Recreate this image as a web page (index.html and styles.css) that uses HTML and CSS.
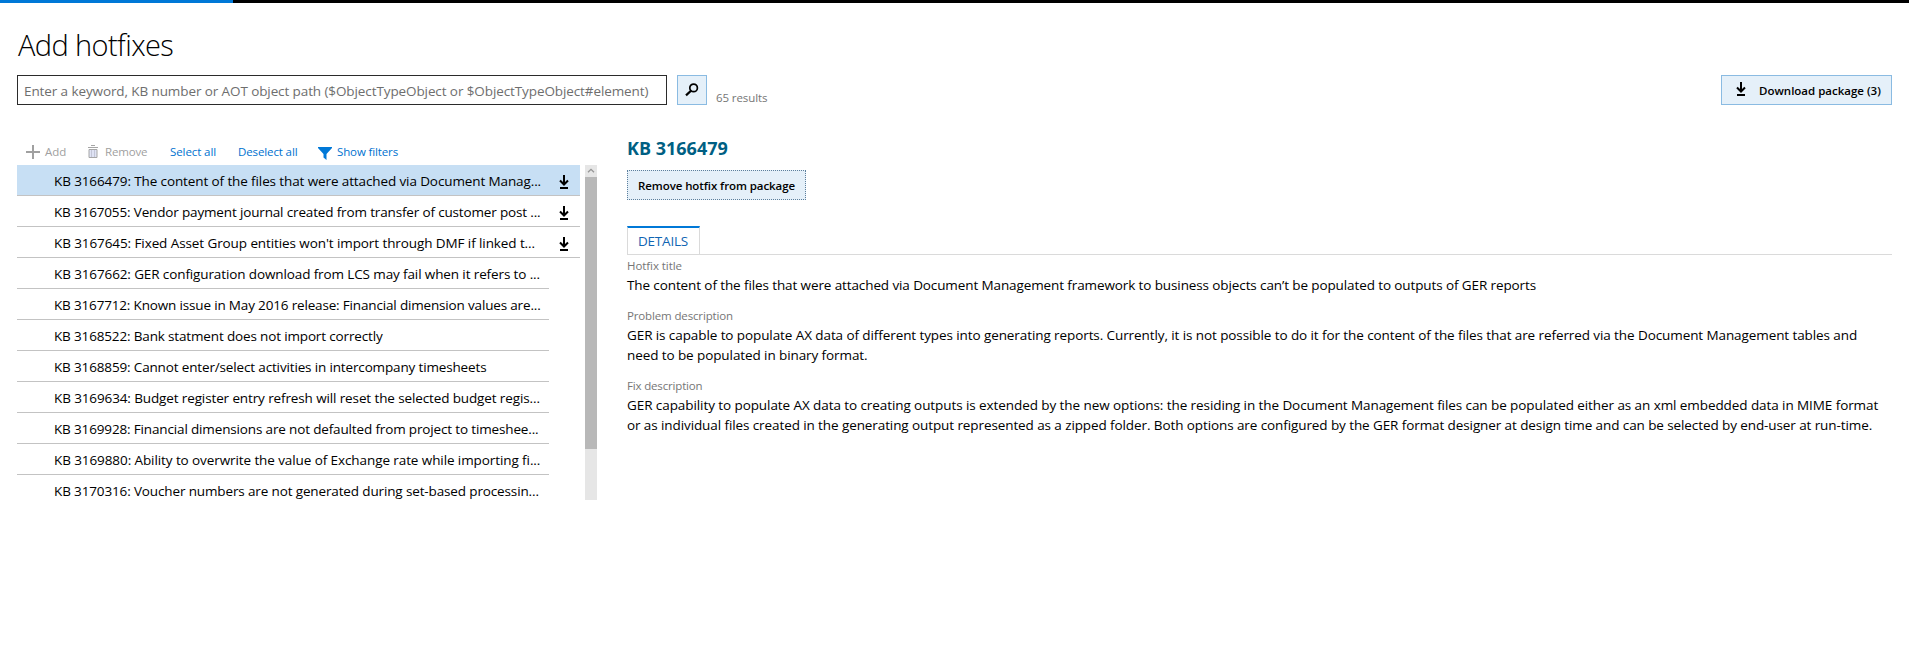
FILE: index.html
```
<!DOCTYPE html>
<html lang="en">
<head>
<meta charset="utf-8">
<title>Add hotfixes</title>
<link rel="stylesheet" href="styles.css">
</head>
<body>
<svg class="sprite" width="0" height="0">
  <symbol id="download" viewBox="0 0 10 15"><path d="M5 0v9M1 5.5l4 4 4-4" fill="none" stroke="#000" stroke-width="2"/><path d="M1 12h8v2H1z" fill="#000"/></symbol>
</svg>
<div class="progress"><div class="progress-fill"></div></div>
<main class="page">
  <h1 class="title">Add hotfixes</h1>
  <div class="search-row">
    <input class="search" type="text" placeholder="Enter a keyword, KB number or AOT object path ($ObjectTypeObject or $ObjectTypeObject#element)">
    <button class="btn search-btn" aria-label="Search"><svg width="14" height="14" viewBox="0 0 14 14"><circle cx="8.6" cy="4.9" r="3.8" fill="none" stroke="#000" stroke-width="1.7"/><path d="M6 7.7L1 12.4" stroke="#000" stroke-width="2.2"/></svg></button>
    <span class="count">65 results</span>
    <button class="btn download-btn"><svg class="dl" width="10" height="15"><use href="#download"/></svg><span>Download package (3)</span></button>
  </div>
  <div class="columns">
    <section class="left">
      <div class="toolbar">
        <span class="tool tool-add off"><svg width="14" height="14" viewBox="0 0 14 14"><path d="M7 0v14M0 7h14" stroke="#a0a0a0" stroke-width="2"/></svg><span>Add</span></span>
        <span class="tool tool-remove off"><svg width="10" height="13" viewBox="0 0 10 13"><path d="M3 .5h4M0 2.5h10" stroke="#a6a6a6" fill="none"/><path d="M1 4.500h8v8H1z" fill="#dfe3f4" stroke="#a6a6a6"/><path d="M3.500 5v7M6.500 5v7" stroke="#c3c6d8"/></svg><span>Remove</span></span>
        <span class="tool tool-select">Select all</span>
        <span class="tool tool-deselect">Deselect all</span>
        <span class="tool tool-filter"><svg width="14" height="13" viewBox="0 0 14 13"><path d="M0 0h14v1L8.500 7v6L5.500 10.500V7L0 1z" fill="#0078d7"/></svg><span>Show filters</span></span>
      </div>
      <div class="list-wrap">
        <ul class="list">
          <li class="row queued selected"><span>KB 3166479: The content of the files that were attached via Document Manag...</span><svg class="dl" width="10" height="15"><use href="#download"/></svg></li>
          <li class="row queued"><span>KB 3167055: Vendor payment journal created from transfer of customer post ...</span><svg class="dl" width="10" height="15"><use href="#download"/></svg></li>
          <li class="row queued"><span>KB 3167645: Fixed Asset Group entities won't import through DMF if linked t...</span><svg class="dl" width="10" height="15"><use href="#download"/></svg></li>
          <li class="row"><span>KB 3167662: GER configuration download from LCS may fail when it refers to ...</span></li>
          <li class="row"><span>KB 3167712: Known issue in May 2016 release: Financial dimension values are...</span></li>
          <li class="row"><span>KB 3168522: Bank statment does not import correctly</span></li>
          <li class="row"><span>KB 3168859: Cannot enter/select activities in intercompany timesheets</span></li>
          <li class="row"><span>KB 3169634: Budget register entry refresh will reset the selected budget regis...</span></li>
          <li class="row"><span>KB 3169928: Financial dimensions are not defaulted from project to timeshee...</span></li>
          <li class="row"><span>KB 3169880: Ability to overwrite the value of Exchange rate while importing fi...</span></li>
          <li class="row"><span>KB 3170316: Voucher numbers are not generated during set-based processin...</span></li>
        </ul>
        <div class="scrollbar">
          <div class="scroll-up"><svg width="8" height="5" viewBox="0 0 8 5"><path d="M1 4.300l3-3 3 3" fill="none" stroke="#959595" stroke-width="1.3"/></svg></div>
          <div class="scroll-thumb"></div>
        </div>
      </div>
    </section>
    <section class="detail">
      <h2 class="kb">KB 3166479</h2>
      <button class="btn remove-btn"><span>Remove hotfix from package</span></button>
      <div class="tabs"><div class="tab">DETAILS</div></div>
      <div class="field">
        <div class="label l-title">Hotfix title</div>
        <p class="text t-title">The content of the files that were attached via Document Management framework to business objects can’t be populated to outputs of GER reports</p>
      </div>
      <div class="field">
        <div class="label l-problem">Problem description</div>
        <p class="text t-problem">GER is capable to populate AX data of different types into generating reports. Currently, it is not possible to do it for the content of the files that are referred via the Document Management tables and<br>need to be populated in binary format.</p>
      </div>
      <div class="field">
        <div class="label l-fix">Fix description</div>
        <p class="text t-fix">GER capability to populate AX data to creating outputs is extended by the new options: the residing in the Document Management files can be populated either as an xml embedded data in MIME format<br><span class="t-fix-end">or as individual files created in the generating output represented as a zipped folder. Both options are configured by the GER format designer at design time and can be selected by end-user at run-time.</span></p>
      </div>
    </section>
  </div>
</main>
</body>
</html>
```
FILE: styles.css
```
* { box-sizing: border-box; }
body { margin: 0; background: #fff; color: #000; font: 13.5px/20px "Open Sans", "Noto Sans", sans-serif; overflow: hidden; }
h1, h2, p, ul { margin: 0; padding: 0; }
svg { display: block; flex: none; }
.sprite { position: absolute; }

.progress { height: 3px; background: #000; }
.progress-fill { width: 233px; height: 3px; background: #0078d7; }

.page { padding: 22px 17px 0; }
.title { height: 50px; padding-left: 1px; font-size: 29px; font-weight: 300; line-height: 40px; letter-spacing: -.6px; white-space: nowrap; }

.search-row { display: flex; height: 30px; }
.search { width: 650px; height: 30px; padding: 2px 6px 0; border: 1px solid #2b2b2b; border-radius: 0; outline: none; font: inherit; letter-spacing: -.1px; }
.search::placeholder { color: #6e6e6e; opacity: 1; }
.btn { display: flex; align-items: center; height: 30px; padding: 0; border: 1px solid #8abbe2; background: #e5f0f9; color: #000; font: 600 11.5px/20px "Open Sans", "Noto Sans", sans-serif; white-space: nowrap; }
.search-btn { width: 30px; margin-left: 10px; padding-left: 7px; }
.count { margin-left: 9px; padding-top: 13px; color: #767676; font-size: 11.5px; line-height: 20px; letter-spacing: -.1px; }
.download-btn { width: 171px; margin-left: auto; padding-left: 14px; gap: 13px; }
.download-btn .dl { margin-top: -2px; }
.download-btn span { padding-top: 1px; }

.columns { display: flex; padding-top: 31px; }
.left { width: 580px; }
.toolbar { display: flex; height: 29px; padding: 6px 0 0 9px; font-size: 11.5px; line-height: 20px; color: #0072cf; white-space: nowrap; }
.tool { display: flex; align-items: center; height: 20px; }
.off { color: #a0a0a0; }
.tool-add { width: 62px; gap: 5px; }
.tool-remove { width: 82px; gap: 7px; letter-spacing: -.18px; }
.tool-remove svg { margin-top: -1px; }
.tool-select { width: 68px; letter-spacing: -.09px; }
.tool-deselect { width: 80px; letter-spacing: -.12px; }
.tool-filter { gap: 5px; letter-spacing: -.13px; }
.tool-filter svg { margin-top: 3px; }

.list-wrap { display: flex; justify-content: space-between; height: 335px; }
.list { width: 563px; height: 335px; overflow: hidden; list-style: none; }
.row { display: flex; justify-content: space-between; width: 532px; height: 31px; padding: 6px 11px 0 37px; border-bottom: 1px solid #c3c3c3; white-space: nowrap; }
.queued { width: 563px; }
.queued .dl { margin-top: 4px; }
.selected { background: #c7dff4; }
.row:nth-child(1) { letter-spacing: -.112px; }
.row:nth-child(2) { letter-spacing: -.154px; }
.row:nth-child(3) { letter-spacing: -.093px; }
.row:nth-child(4) { letter-spacing: -.117px; }
.row:nth-child(5) { letter-spacing: -.166px; }
.row:nth-child(6) { letter-spacing: -.153px; }
.row:nth-child(7) { letter-spacing: -.15px; }
.row:nth-child(8) { letter-spacing: -.12px; }
.row:nth-child(9) { letter-spacing: -.15px; }
.row:nth-child(10) { letter-spacing: -.09px; }
.row:nth-child(11) { letter-spacing: -.135px; }
.scrollbar { width: 12px; height: 335px; background: #e6e6e6; }
.scroll-up { display: flex; justify-content: center; height: 12px; padding-top: 3px; }
.scroll-thumb { height: 272px; background: #b8b8b8; }

.detail { flex: 1; margin-left: 30px; }
.kb { height: 34px; color: #005f83; font-size: 18px; font-weight: 700; line-height: 25px; letter-spacing: 0; }
.remove-btn { width: 179px; padding-left: 10px; border: 1px dotted #5d7f9c; letter-spacing: -.084px; }
.remove-btn span { padding-top: 1px; }
.tabs { display: flex; height: 29px; margin-top: 26px; border-bottom: 1px solid #dadada; }
.tab { width: 73px; height: 28px; padding: 3px 0 0 10px; border: 1px solid #dadada; border-top: 2px solid #0078d7; border-bottom: 0; color: #1065b3; letter-spacing: -.214px; }
.field { padding-bottom: 10px; white-space: nowrap; }
.label { height: 20px; padding-top: 1px; color: #767676; font-size: 11.5px; line-height: 20px; }
.l-title { letter-spacing: -.063px; }
.l-problem { letter-spacing: -.141px; }
.l-fix { letter-spacing: -.164px; }
.t-title { letter-spacing: -.108px; }
.t-problem { letter-spacing: -.09px; }
.t-fix { letter-spacing: -.08px; }
.t-fix-end { letter-spacing: -.095px; }
```
